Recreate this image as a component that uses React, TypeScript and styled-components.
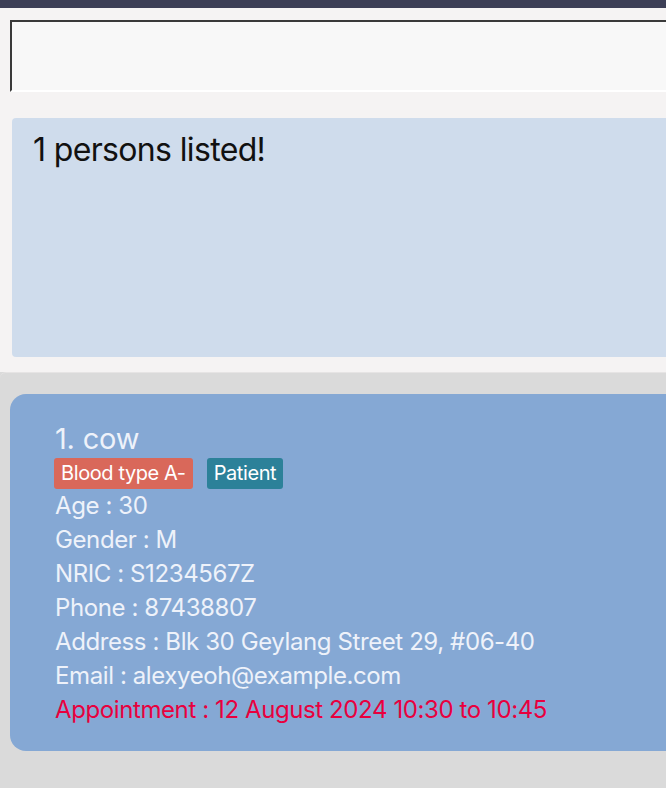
import React from "react";
import styled, { createGlobalStyle } from "styled-components";

const Global = createGlobalStyle`
  html, body { margin: 0; padding: 0; background: #dadada; overflow: hidden; }
  body { font-family: Inter, "Noto Sans", sans-serif; }
`;

const Page = styled.div`
  width: 100%;
  min-height: 788px;
  display: flex;
  flex-direction: column;
  overflow: hidden;
`;

const TopBar = styled.div`
  height: 8px;
  background: #3c3f56;
`;

const Upper = styled.div`
  background: #f5f3f3;
  padding: 12px 0 15px 0;
  display: flex;
  flex-direction: column;
`;

const CommandBox = styled.div`
  margin-left: 10px;
  margin-right: -20px;
  height: 68px;
  background: #f8f8f8;
  border-top: 2px solid #3a3a3a;
  border-left: 2px solid #3a3a3a;
  border-bottom: 2px solid #ffffff;
`;

const ResultBox = styled.div`
  margin: 26px -20px 0 12px;
  height: 239px;
  box-sizing: border-box;
  background: #cfdcec;
  border-radius: 4px;
  padding: 12px 21px;
  font-size: 32px;
  letter-spacing: -0.65px;
  color: #111;
`;

const ListArea = styled.div`
  flex: 1;
  background: #dadada;
  border-top: 1px solid #e6e4e4;
  border-top-left-radius: 6px;
  padding: 21px 0 0 10px;
`;

const Card = styled.div`
  margin-right: -20px;
  background: #85a8d4;
  border-radius: 16px;
  padding: 28px 0 24px 45px;
  color: #eef2fa;
`;

const Name = styled.div`
  font-size: 29px;
  line-height: 34px;
  letter-spacing: -0.2px;
`;

const Tags = styled.div`
  display: flex;
  gap: 14px;
  margin: 2px 0 0 -1px;
`;

const Tag = styled.span<{ $bg: string }>`
  background: ${(p) => p.$bg};
  color: #fff;
  font-size: 20px;
  line-height: 31px;
  padding: 0 7px;
  border-radius: 3px;
  letter-spacing: -0.4px;
`;

const Field = styled.div<{ $alert?: boolean }>`
  font-size: 24px;
  line-height: 34px;
  letter-spacing: -0.4px;
  color: ${(p) => (p.$alert ? "#e8003e" : "#eef2fa")};
`;

const fields = [
  "Age : 30",
  "Gender : M",
  "NRIC : S1234567Z",
  "Phone : 87438807",
  "Address : Blk 30 Geylang Street 29, #06-40",
  "Email : alexyeoh@example.com",
];

export default function App() {
  return (
    <>
      <Global />
      <Page>
        <TopBar />
        <Upper>
          <CommandBox />
          <ResultBox>1 persons listed!</ResultBox>
        </Upper>
        <ListArea>
          <Card>
            <Name>1. cow</Name>
            <Tags>
              <Tag $bg="#d9685a">Blood type A-</Tag>
              <Tag $bg="#2c8199">Patient</Tag>
            </Tags>
            {fields.map((f) => (
              <Field key={f}>{f}</Field>
            ))}
            <Field $alert>Appointment : 12 August 2024 10:30 to 10:45</Field>
          </Card>
        </ListArea>
      </Page>
    </>
  );
}
